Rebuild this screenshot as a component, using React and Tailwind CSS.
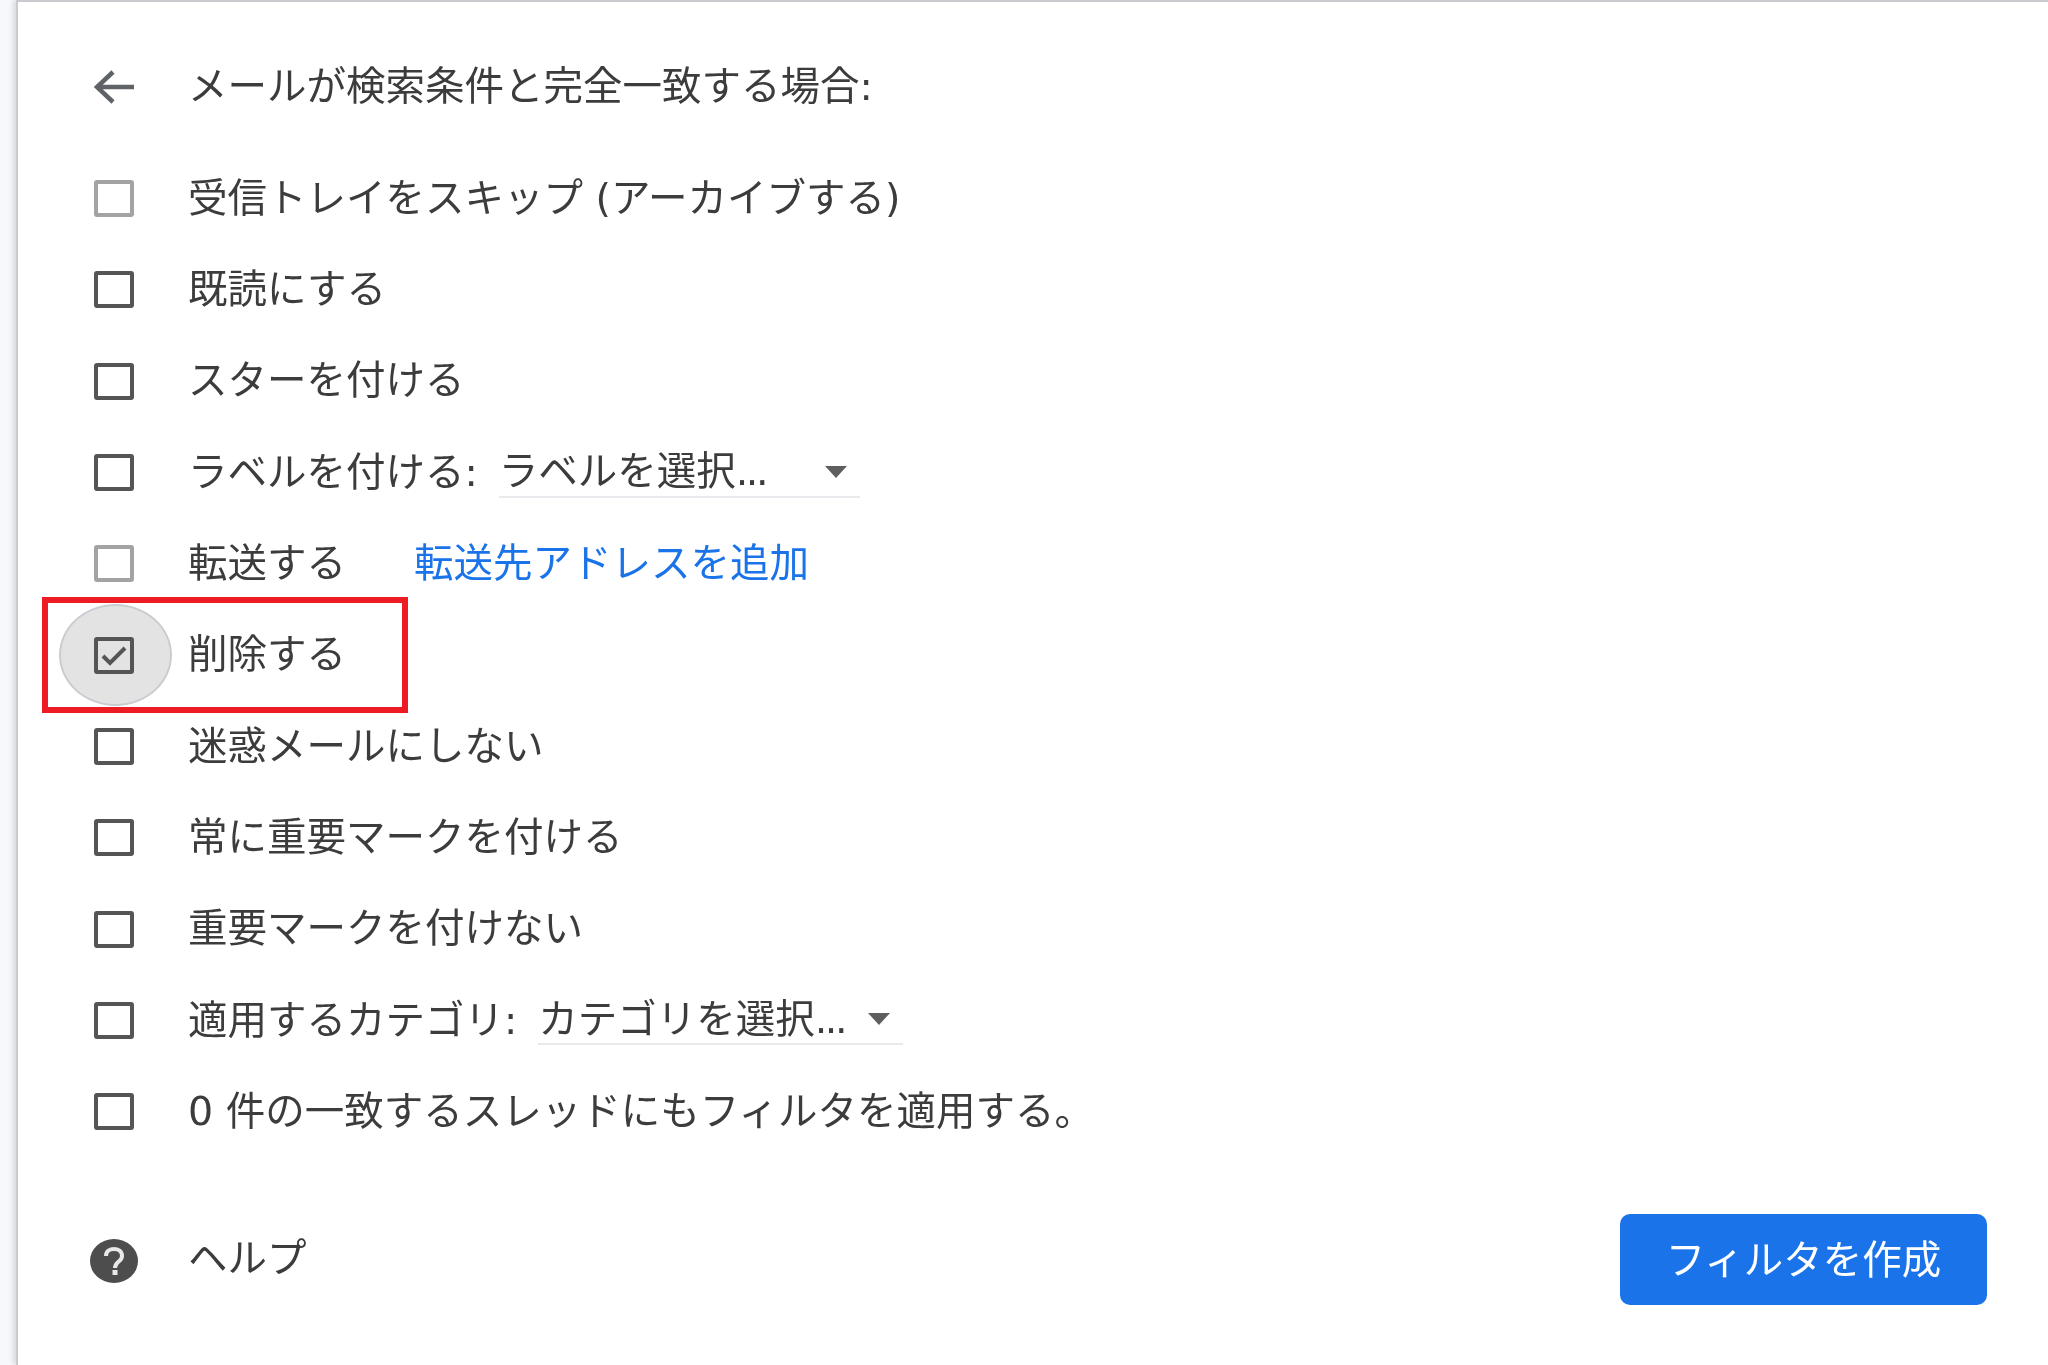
import React from 'react';

const font = { fontFamily: '"DejaVu Sans", "Noto Sans CJK JP", sans-serif' };

const Box = ({ dim, checked }) => (
  <span
    className={`relative block w-[40px] h-[37px] mt-[2px] rounded-[3px] border-[4px] shrink-0 ${
      dim ? 'border-[#a3a3a3]' : 'border-[#555]'
    }`}
  >
    {checked && (
      <svg viewBox="0 0 32 29" className="absolute inset-0 w-full h-full" fill="none">
        <path d="M5 15l7 7L27 7" stroke="#555" strokeWidth="4" />
      </svg>
    )}
  </span>
);

const Caret = ({ className }) => (
  <svg viewBox="0 0 22 12" className={className}>
    <path d="M0 0h22L11 12z" fill="#5f5f5f" />
  </svg>
);

const Select = ({ text, widthClass, gapClass }) => (
  <span className={`flex items-center justify-between h-[52px] border-b-2 border-[#e8eaed] ${widthClass} ${gapClass}`}>
    <span className="pt-[2px]">
      {text}
      <span className="tracking-[-2.5px]">...</span>
    </span>
    <Caret className="w-[22px] h-[12px] mr-[13px] mt-[2px]" />
  </span>
);

const rows = [
  { label: '受信トレイをスキップ (アーカイブする)', dim: true },
  { label: '既読にする' },
  { label: 'スターを付ける' },
  {
    label: 'ラベルを付ける:',
    extra: <Select text="ラベルを選択" widthClass="w-[361px]" gapClass="ml-[21px]" />,
  },
  {
    label: '転送する',
    dim: true,
    extra: <a className="ml-[68px] pt-[2px] text-[#1a73e8]">転送先アドレスを追加</a>,
  },
  { label: '削除する', checked: true },
  { label: '迷惑メールにしない' },
  { label: '常に重要マークを付ける' },
  { label: '重要マークを付けない' },
  {
    label: '適用するカテゴリ:',
    extra: <Select text="カテゴリを選択" widthClass="w-[365px]" gapClass="ml-[21px]" />,
  },
  { label: '0 件の一致するスレッドにもフィルタを適用する。' },
];

export default function App() {
  return (
    <div className="w-[2048px] h-[1365px] flex bg-[#f6f8fc] overflow-hidden text-[#3c3c3c] text-[39.5px] leading-none blur-[0.6px]" style={font}>
      <div className="w-4 shrink-0" />
      <div className="flex-1 bg-white border-l-2 border-t-2 border-[#c9cbce] pl-[76px] pr-[61px] shadow-[-3px_0_5px_rgba(0,0,0,0.12)]">
        <div className="flex items-center h-[84px] mt-[42px] mb-[24px]">
          <svg viewBox="0 0 40 34" className="w-[40px] h-[34px] mt-[2px] shrink-0" fill="none">
            <path d="M19 2L3 17l16 15M3 17h37" stroke="#5f6368" strokeWidth="4.5" />
          </svg>
          <span className="ml-[54px] pt-[2px]">メールが検索条件と完全一致する場合:</span>
        </div>

        <div className="flex flex-col">
          {rows.map((row, index) => (
            <div key={index} className="relative flex items-center h-[91.3px]">
              {row.checked && (
                <>
                  <span className="absolute left-[-35px] top-[-4px] w-[113px] h-[102px] rounded-[50%] bg-[#e3e3e3] border-2 border-[#c9cdd2]" />
                  <span className="absolute left-[-52px] top-[-11px] w-[366px] h-[116px] border-[6px] border-[#ed1c24]" />
                </>
              )}
              <span className="relative">
                <Box dim={row.dim} checked={row.checked} />
              </span>
              <span className="relative ml-[54px] pt-[2px]">{row.label}</span>
              {row.extra}
            </div>
          ))}
        </div>

        <div className="flex items-center justify-between h-[91px] mt-[58px]">
          <div className="flex items-center">
            <svg viewBox="0 0 48 44" className="w-[48px] h-[44px] -ml-[4px] mt-[2px] shrink-0">
              <ellipse cx="24" cy="22" rx="24" ry="22" fill="#4d4d4d" />
              <path d="M16 17c0-5 4-7 8-7s8 2 8 7c0 6-7 5-7 12" fill="none" stroke="#e8e8e8" strokeWidth="4" />
              <rect x="22.5" y="31" width="5" height="5" fill="#e8e8e8" />
            </svg>
            <span className="ml-[50px] pb-[3px]">ヘルプ</span>
          </div>
          <button className="w-[367px] h-[91px] rounded-[10px] bg-[#1a73e8] text-white pt-[2px]">フィルタを作成</button>
        </div>
      </div>
    </div>
  );
}
